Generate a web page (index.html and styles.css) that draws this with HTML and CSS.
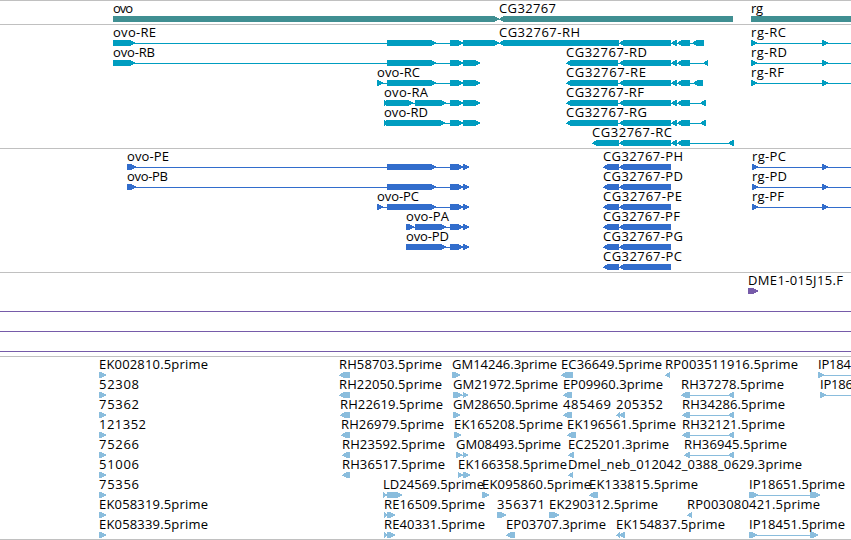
FILE: index.html
```
<!DOCTYPE html>
<html lang="en">
<head>
    <meta charset="UTF-8">
    <meta name="viewport" content="width=device-width, initial-scale=1.0">
    <title>Genome Browser</title>
    <link rel="stylesheet" href="styles.css">
</head>
<body>
    <main class="browser">
        <svg class="track genes" id="genes"></svg>
        <svg class="track transcripts" id="transcripts"></svg>
        <svg class="track proteins" id="proteins"></svg>
        <svg class="track clones" id="clones"></svg>
        <svg class="track ests" id="ests"></svg>
    </main>
    <script src="tracks.js"></script>
</body>
</html>
```
FILE: styles.css
```
body {
    margin: 0;
    background-color: white;
    overflow: hidden;
}
.browser {
    display: flex;
    flex-direction: column;
}
.track {
    display: block;
    box-sizing: border-box;
    width: 851px;
    flex: none;
    border-top: 1px solid #c0c0c0;
    font-family: "Open Sans", "Noto Sans", sans-serif;
    font-weight: 370;
    font-size: 13px;
    shape-rendering: crispEdges;
}
.track text {
    fill: #000;
}
.genes {
    height: 24px;
    color: #408f92;
}
.transcripts {
    height: 124px;
    color: #009dc0;
}
.proteins {
    height: 124px;
    color: #326dcc;
}
.clones {
    height: 84px;
    color: #765ba9;
}
.ests {
    height: 184px;
    color: #8abddd;
    border-bottom: 1px solid #c0c0c0;
}
```
FILE: tracks.js
```
const SVG = 'http://www.w3.org/2000/svg';

function add(parent, tag, attrs) {
    const el = document.createElementNS(SVG, tag);
    for (const key in attrs) {
        el.setAttribute(key, attrs[key]);
    }
    parent.appendChild(el);
    return el;
}

// one exon, 6px high, tapered towards its strand
function block(svg, start, end, y, strand) {
    const head = Math.min(5, end - start);
    const tip = strand > 0 ? end : start;
    const tail = strand > 0 ? start : end;
    const neck = tip - strand * head;
    const mid = tip - strand;
    const points = [[tail, y], [neck, y], [mid, y + 2], [tip, y + 3], [tip, y + 4], [mid, y + 4], [neck, y + 6], [tail, y + 6]];
    add(svg, 'polygon', { points: points.join(' '), fill: 'currentColor' });
}

// feature: [row, label, labelStart, labelEnd, strand, exons, lineEnd]
function draw(id, features, top) {
    const svg = document.getElementById(id);
    for (const [row, label, from, to, strand, exons, lineEnd] of features) {
        const y = top + row * 20;
        const last = exons[exons.length - 1];
        const start = exons[0][0];
        add(svg, 'rect', { x: start, y: y + 3, width: (lineEnd || last[1]) - start, height: 1, fill: 'currentColor' });
        for (const [a, b] of exons) {
            block(svg, a, b, y, strand);
        }
        const text = add(svg, 'text', { x: from, y: y - 3, textLength: to - from });
        text.textContent = label;
    }
}

draw('genes', [
    [0, 'ovo', 113, 133, 1, [[113, 499]]],
    [0, 'CG32767', 499, 556, -1, [[499, 733]]],
    [0, 'rg', 751, 763, 1, [[751, 860]]]
], 15);

const ovoEnd = [[450, 463], [463, 480]];
const cgEnd = [[619, 671], [671, 677], [677, 690]];
draw('transcripts', [
    [0, 'ovo-RE', 113, 156, 1, [[113, 135], [387, 436], [450, 463], [463, 499]]],
    [0, 'CG32767-RH', 499, 580, -1, [[499, 619], ...cgEnd, [692, 704]]],
    [0, 'rg-RC', 751, 786, 1, [[751, 757], [822, 828]], 851],
    [1, 'ovo-RB', 113, 155, 1, [[113, 135], [387, 436], ...ovoEnd]],
    [1, 'CG32767-RD', 566, 647, -1, [[566, 618], ...cgEnd, [703, 708]]],
    [1, 'rg-RD', 751, 787, 1, [[751, 757], [822, 828]], 851],
    [2, 'ovo-RC', 377, 420, 1, [[377, 383], [387, 436], ...ovoEnd]],
    [2, 'CG32767-RE', 566, 646, -1, [[566, 618], ...cgEnd, [693, 703]]],
    [2, 'rg-RF', 751, 784, 1, [[751, 757], [822, 828]], 851],
    [3, 'ovo-RA', 384, 428, 1, [[384, 387], [386, 413], [415, 446], ...ovoEnd]],
    [3, 'CG32767-RF', 566, 644, -1, [[566, 618], ...cgEnd, [700, 706]]],
    [4, 'ovo-RD', 384, 428, 1, [[384, 387], [386, 445], ...ovoEnd]],
    [4, 'CG32767-RG', 566, 647, -1, [[566, 618], ...cgEnd, [700, 706]]],
    [5, 'CG32767-RC', 592, 672, -1, [[592, 619], ...cgEnd, [728, 734]]]
], 15);

const ovoProtein = [[450, 463], [463, 469]];
const cgProtein = [[603, 619], [619, 671]];
draw('proteins', [
    [0, 'ovo-PE', 127, 169, 1, [[127, 136], [387, 436], ...ovoProtein]],
    [1, 'ovo-PB', 127, 168, 1, [[127, 136], [387, 436], ...ovoProtein]],
    [2, 'ovo-PC', 377, 419, 1, [[377, 383], [387, 436], ...ovoProtein]],
    [3, 'ovo-PA', 406, 449, 1, [[406, 414], [415, 446], ...ovoProtein]],
    [4, 'ovo-PD', 406, 449, 1, [[406, 446], ...ovoProtein]],
    [0, 'CG32767-PH', 603, 683, -1, cgProtein],
    [1, 'CG32767-PD', 603, 683, -1, cgProtein],
    [2, 'CG32767-PE', 603, 682, -1, cgProtein],
    [3, 'CG32767-PF', 603, 680, -1, cgProtein],
    [4, 'CG32767-PG', 603, 683, -1, cgProtein],
    [5, 'CG32767-PC', 603, 682, -1, cgProtein],
    [0, 'rg-PC', 752, 786, 1, [[752, 758], [822, 828]], 851],
    [1, 'rg-PD', 752, 787, 1, [[752, 758], [822, 828]], 851],
    [2, 'rg-PF', 752, 784, 1, [[752, 758], [822, 828]], 851]
], 15);

draw('clones', [
    [0, 'DME1-015J15.F', 748, 843, 1, [[748, 758]]]
], 15);
// clones that span the whole view
for (const y of [38, 58, 78]) {
    add(document.getElementById('clones'), 'rect', { x: 0, y: y, width: 851, height: 1, fill: 'currentColor' });
}

draw('ests', [
    [0, 'EK002810.5prime', 99, 208, 1, [[99, 106]]],
    [1, '52308', 99, 139, 1, [[99, 106]]],
    [2, '75362', 99, 139, 1, [[99, 106]]],
    [3, '121352', 99, 146, 1, [[99, 106]]],
    [4, '75266', 99, 139, 1, [[99, 106]]],
    [5, '51006', 99, 139, 1, [[99, 106]]],
    [6, '75356', 99, 139, 1, [[99, 106]]],
    [7, 'EK058319.5prime', 99, 208, 1, [[99, 106]]],
    [8, 'EK058339.5prime', 99, 208, 1, [[99, 106]]],

    [0, 'RH58703.5prime', 339, 442, -1, [[339, 350]]],
    [1, 'RH22050.5prime', 339, 442, -1, [[339, 350]]],
    [2, 'RH22619.5prime', 340, 443, -1, [[340, 350]]],
    [3, 'RH26979.5prime', 341, 444, -1, [[341, 350]]],
    [4, 'RH23592.5prime', 342, 445, -1, [[342, 350]]],
    [5, 'RH36517.5prime', 342, 445, -1, [[342, 350]]],
    [6, 'LD24569.5prime', 383, 484, 1, [[383, 387], [387, 402]]],
    [7, 'RE16509.5prime', 384, 485, 1, [[384, 388], [387, 395]]],
    [8, 'RE40331.5prime', 384, 485, 1, [[384, 388], [387, 395]]],

    [0, 'GM14246.3prime', 452, 557, 1, [[452, 460]]],
    [1, 'GM21972.5prime', 453, 558, 1, [[453, 462], [463, 468]]],
    [2, 'GM28650.5prime', 453, 558, 1, [[453, 460]]],
    [3, 'EK165208.5prime', 454, 563, 1, [[454, 461]]],
    [4, 'GM08493.5prime', 456, 561, 1, [[456, 462], [463, 468]]],
    [5, 'EK166358.5prime', 458, 567, 1, [[458, 463], [463, 470]]],
    [6, 'EK095860.5prime', 482, 591, 1, [[482, 489]]],
    [7, '356371', 497, 545, 1, [[497, 506]]],
    [8, 'EP03707.3prime', 506, 606, -1, [[506, 515]]],

    [0, 'EC36649.5prime', 561, 662, -1, [[561, 573]]],
    [1, 'EP09960.3prime', 563, 663, -1, [[563, 572]]],
    [2, '485469', 563, 611, -1, [[563, 572]]],
    [3, 'EK196561.5prime', 567, 676, -1, [[567, 576]]],
    [4, 'EC25201.3prime', 568, 669, -1, [[568, 574]]],
    [5, 'Dmel_neb_012042_0388_0629.3prime', 568, 802, -1, [[568, 573]]],
    [6, 'EK133815.5prime', 589, 698, -1, [[589, 598]]],
    [7, 'EK290312.5prime', 549, 658, 1, [[549, 559]]],
    [2, '205352', 616, 663, -1, [[616, 620], [619, 625]]],
    [8, 'EK154837.5prime', 616, 725, -1, [[616, 620], [619, 625]]],

    [0, 'RP003511916.5prime', 665, 798, -1, [[665, 670]]],
    [1, 'RH37278.5prime', 681, 784, -1, [[681, 690], [728, 734]]],
    [2, 'RH34286.5prime', 682, 785, -1, [[682, 690], [728, 734]]],
    [3, 'RH32121.5prime', 682, 785, -1, [[682, 690], [728, 734]]],
    [4, 'RH36945.5prime', 684, 787, -1, [[684, 690], [728, 734]]],
    [7, 'RP003080421.5prime', 687, 820, -1, [[687, 692]]],
    [6, 'IP18651.5prime', 749, 845, 1, [[749, 758], [810, 820]]],
    [8, 'IP18451.5prime', 749, 845, 1, [[749, 757], [810, 818]]],
    [0, 'IP184', 818, 851, 1, [[818, 824]], 851],
    [1, 'IP186', 820, 853, 1, [[820, 826]], 851]
], 15);
```
